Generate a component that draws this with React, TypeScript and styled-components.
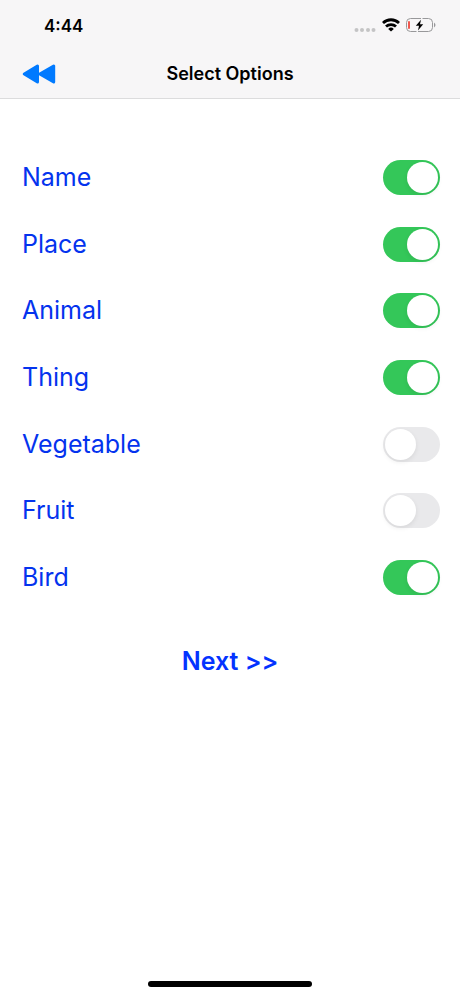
import React, { useState } from "react";
import styled, { createGlobalStyle } from "styled-components";

const GlobalStyle = createGlobalStyle`
  * { box-sizing: border-box; }
  html, body { margin: 0; background: #fff; }
  body { font-family: Inter, "Liberation Sans", sans-serif; }
`;

const Screen = styled.div`
  display: flex;
  flex-direction: column;
  min-height: 100vh;
  background: #fff;
`;

const Header = styled.header`
  background: #f7f6f7;
  border-bottom: 1px solid #dcdcdd;
`;

const StatusBar = styled.div`
  display: flex;
  align-items: flex-end;
  justify-content: space-between;
  height: 50px;
  padding: 0 24px 14px 44px;
`;

const Time = styled.time`
  font-size: 17px;
  font-weight: 600;
  line-height: 20px;
  color: #000;
`;

const StatusIcons = styled.div`
  display: flex;
  align-items: flex-end;
  gap: 6px;
  padding-bottom: 4px;
`;

const NavBar = styled.nav`
  display: grid;
  grid-template-columns: 1fr auto 1fr;
  align-items: center;
  height: 48px;
  padding: 0 22px;
`;

const BackButton = styled.button`
  display: flex;
  justify-self: start;
  padding: 0;
  border: 0;
  background: none;
  cursor: pointer;
`;

const Title = styled.h1`
  margin: 0;
  font-size: 18px;
  font-weight: 600;
  line-height: 24px;
  color: #000;
`;

const Main = styled.main`
  display: flex;
  flex: 1;
  flex-direction: column;
  padding-top: 61px;
`;

const OptionList = styled.div`
  display: flex;
  flex-direction: column;
  justify-content: space-between;
  min-height: 435px;
  padding: 0 20px 0 22px;
`;

const OptionRow = styled.label`
  display: flex;
  align-items: center;
  justify-content: space-between;
  font-size: 25px;
  line-height: 35px;
  color: #0433ee;
  cursor: pointer;
`;

const Toggle = styled.input`
  appearance: none;
  display: flex;
  align-items: center;
  width: 57px;
  height: 35px;
  margin: 0;
  padding: 2px;
  border-radius: 18px;
  background: #e9e9eb;
  cursor: pointer;

  &::before {
    content: "";
    width: 31px;
    height: 31px;
    border-radius: 50%;
    background: #fff;
    box-shadow: 0 2px 5px rgba(0, 0, 0, 0.08);
  }

  &:checked {
    justify-content: flex-end;
    background: #34c759;
  }
`;

const NextButton = styled.button`
  align-self: center;
  margin: 50px 0 0;
  padding: 0;
  border: 0;
  background: none;
  font-family: inherit;
  font-size: 25px;
  font-weight: 600;
  line-height: 32px;
  color: #0433ff;
  cursor: pointer;
`;

const HomeIndicator = styled.div`
  align-self: center;
  width: 164px;
  height: 6px;
  margin-bottom: 9px;
  border-radius: 3px;
  background: #000;
`;

const options = [
  { name: "Name", on: true },
  { name: "Place", on: true },
  { name: "Animal", on: true },
  { name: "Thing", on: true },
  { name: "Vegetable", on: false },
  { name: "Fruit", on: false },
  { name: "Bird", on: true },
];

const SignalIcon = () => (
  <svg width="22" height="4" viewBox="0 0 22 4" fill="#c4c4c5" aria-hidden="true">
    <circle cx="2.500" cy="2" r="2" />
    <circle cx="8" cy="2" r="2" />
    <circle cx="14" cy="2" r="2" />
    <circle cx="19.500" cy="2" r="2" />
  </svg>
);

const WifiIcon = () => (
  <svg width="18" height="14" viewBox="0 0 18 14" fill="none" stroke="#000" strokeWidth="2.800" aria-hidden="true">
    <path d="M1 5a11.500 11.500 0 0 1 16 0" />
    <path d="M4 8.600a7.200 7.200 0 0 1 10 0" />
    <path d="M9 13.600L6.200 10.900a4 4 0 0 1 5.600 0z" fill="#000" stroke="none" />
  </svg>
);

const BatteryIcon = () => (
  <svg width="30" height="14" viewBox="0 0 30 14" aria-hidden="true">
    <rect x="0.500" y="0.500" width="26" height="13" rx="4" fill="none" stroke="#98989a" />
    <path d="M10.500 13.500h1.500M15 0.500h1.500" stroke="#f7f6f7" strokeWidth="1.200" />
    <rect x="2" y="3" width="2" height="8" rx="1" fill="#f0584e" />
    <path d="M28 4.500q3 2.500 0 5z" fill="#98989a" />
    <path d="M15 1.800L9.800 7.800h3.200L12 12.500l5.200-6.300H14z" fill="#000" />
  </svg>
);

const RewindIcon = () => (
  <svg width="34" height="20" viewBox="0 0 34 20" fill="#007aff" stroke="#007aff" strokeWidth="3" strokeLinejoin="round" aria-hidden="true">
    <path d="M15.500 2v16L2.300 10z" />
    <path d="M31.700 2v16L17.800 10z" />
  </svg>
);

export default function App() {
  const [values, setValues] = useState(options.map((option) => option.on));
  const toggle = (index: number) =>
    setValues(values.map((value, i) => (i === index ? !value : value)));

  return (
    <Screen>
      <GlobalStyle />
      <Header>
        <StatusBar>
          <Time>4:44</Time>
          <StatusIcons>
            <SignalIcon />
            <WifiIcon />
            <BatteryIcon />
          </StatusIcons>
        </StatusBar>
        <NavBar>
          <BackButton type="button" aria-label="Back">
            <RewindIcon />
          </BackButton>
          <Title>Select Options</Title>
        </NavBar>
      </Header>
      <Main>
        <OptionList>
          {options.map((option, index) => (
            <OptionRow key={option.name}>
              {option.name}
              <Toggle
                type="checkbox"
                role="switch"
                checked={values[index]}
                onChange={() => toggle(index)}
              />
            </OptionRow>
          ))}
        </OptionList>
        <NextButton type="button">Next &gt;&gt;</NextButton>
      </Main>
      <HomeIndicator />
    </Screen>
  );
}
